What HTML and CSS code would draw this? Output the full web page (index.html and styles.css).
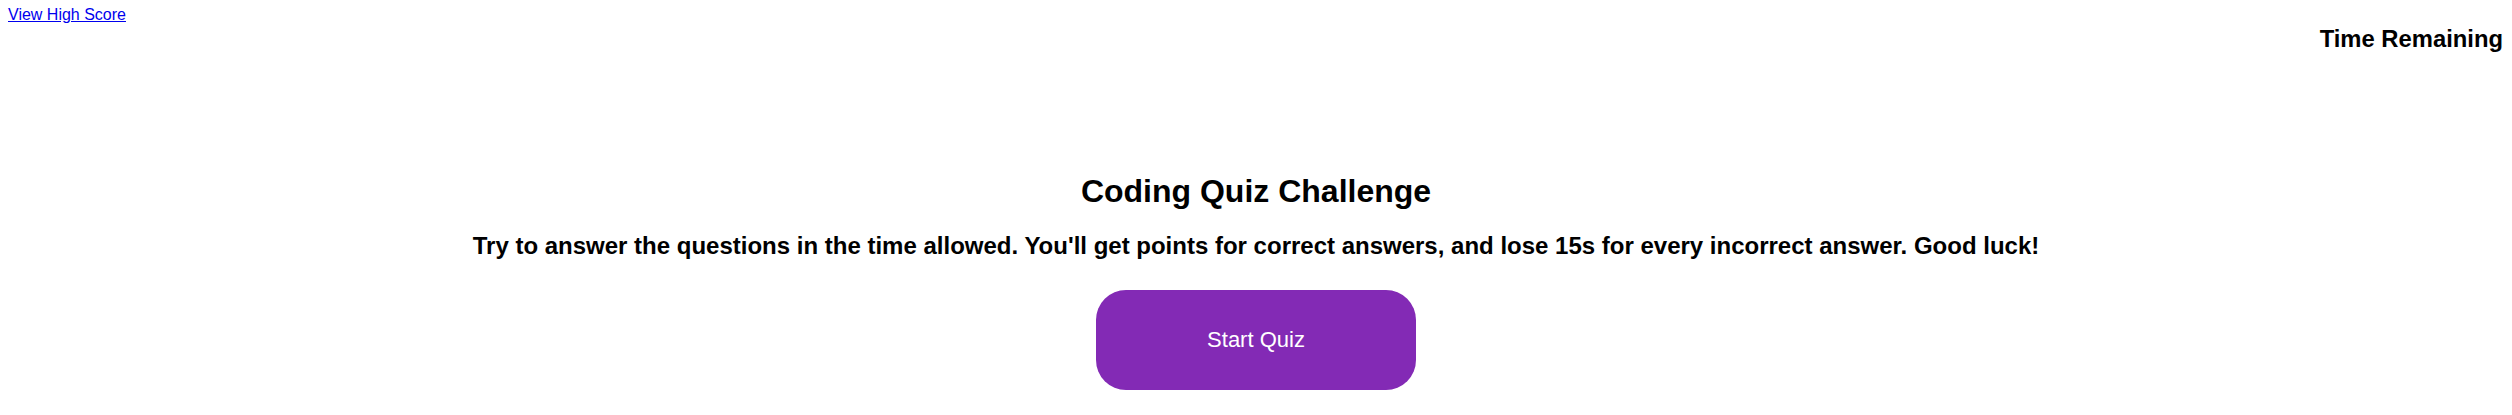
FILE: index.html
```html
<!DOCTYPE html>
<html lang="en">
<head>
<meta charset="utf-8">
<title>Coding Quiz Challenge</title>
<link rel="stylesheet" href="styles.css">
</head>
<body>
<header class="topbar">
  <a class="highscore-link" href="#">View High Score</a>
  <h2 class="timer">Time Remaining</h2>
</header>
<main class="intro">
  <h1 class="intro-title">Coding Quiz Challenge</h1>
  <p class="intro-text">Try to answer the questions in the time allowed. You'll get points for correct answers, and lose 15s for every incorrect answer. Good luck!</p>
  <button class="start-btn" type="button">Start Quiz</button>
</main>
</body>
</html>
```
FILE: styles.css
```css
html, body {
  margin: 0;
  padding: 0;
  background: #ffffff;
}
body {
  font-family: "Liberation Sans", Arial, sans-serif;
  color: #000000;
}
.topbar {
  display: flex;
  justify-content: space-between;
  align-items: flex-start;
  padding: 6px 9px 0 8px;
}
.highscore-link {
  font-size: 16px;
  color: #0000ee;
  text-decoration: underline;
}
.timer {
  margin: 19px 0 0 0;
  font-size: 23.8px;
  font-weight: bold;
}
.intro {
  display: flex;
  flex-direction: column;
  align-items: center;
  margin-top: 120px;
}
.intro-title {
  margin: 0;
  font-size: 32px;
  font-weight: bold;
}
.intro-text {
  margin: 22px 0 0 0;
  font-size: 24px;
  font-weight: bold;
  text-align: center;
}
.start-btn {
  margin-top: 30px;
  width: 320px;
  height: 100px;
  border: none;
  border-radius: 30px;
  background: #832ab5;
  color: #ffffff;
  font-family: "Liberation Sans", Arial, sans-serif;
  font-size: 22px;
  cursor: pointer;
}
```
